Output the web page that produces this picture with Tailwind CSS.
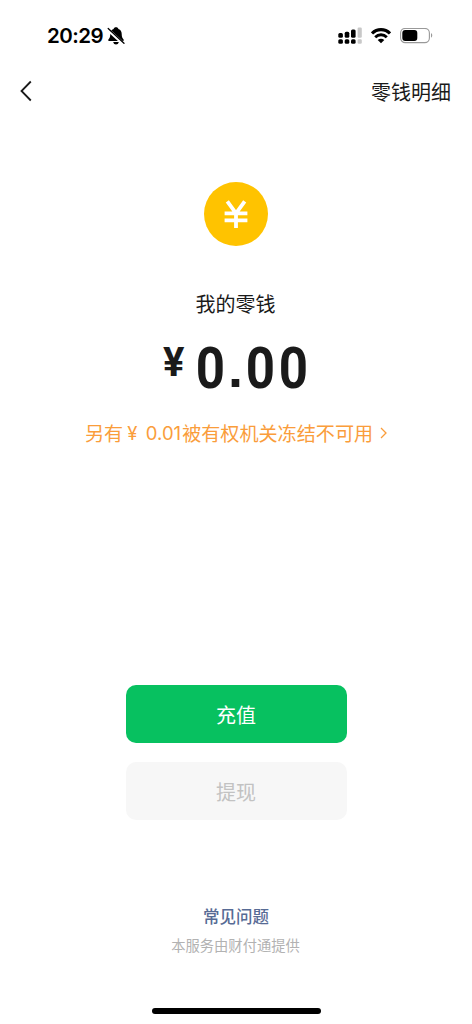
<!DOCTYPE html>
<html lang="zh-CN">
<head>
<meta charset="utf-8">
<title>我的零钱</title>
<script src="https://cdn.jsdelivr.net/npm/@tailwindcss/browser@4"></script>
</head>
<body class="bg-white">
<div class="w-[472px] h-[1024px] overflow-hidden bg-white flex flex-col items-center font-['Noto_Sans_CJK_SC',sans-serif] text-[#1a1a1a]">
  <header class="w-full h-[70px] pt-px shrink-0 flex items-center justify-between pl-[47px] pr-[39px] text-black">
    <div class="flex items-center gap-[3px]">
      <span class="font-['Inter',sans-serif] font-semibold text-[20.5px] leading-6 w-[57px] tracking-[-0.5px] whitespace-nowrap">20:29</span>
      <svg class="w-[18px] h-[18px]" viewBox="0 0 18 18">
        <path d="M9 .3C10.300 .3 11.200 1 11.400 1.900C13.900 2.800 14.700 4.700 14.700 7C14.700 10.100 15.500 11.200 16.600 12.600C17 13.400 16.600 14.100 15.800 14.100H2.200C1.400 14.100 1 13.400 1.400 12.600C2.500 11.200 3.300 10.100 3.300 7C3.300 4.700 4.100 2.800 6.600 1.900C6.800 1 7.700 .3 9 .3ZM6.200 15H11.800C11.500 16.700 10.300 17.500 9 17.500S6.500 16.700 6.200 15Z" fill="currentColor"/>
        <path d="M.5 2.300L16.500 17" stroke="white" stroke-width="3.200"/>
        <path d="M1.200 1.500L17 16.300" stroke="currentColor" stroke-width="1.300" stroke-linecap="round"/>
      </svg>
    </div>
    <div class="flex items-center">
      <svg class="w-6 h-[18px]" viewBox="0 0 24 18">
        <g fill="currentColor">
          <rect x=".3" y="6" width="4.600" height="4.800" rx="1.500"/><rect x="6.700" y="4.800" width="4.600" height="6" rx="1.500"/><rect x="13" y="2.500" width="4.600" height="8.300" rx="1.500"/>
          <rect x=".3" y="12.200" width="4.600" height="4.600" rx="1.500"/><rect x="6.700" y="12.200" width="4.600" height="4.600" rx="1.500"/><rect x="13" y="12.200" width="4.600" height="4.600" rx="1.500"/>
        </g>
        <g fill="#c8c8c8"><rect x="19.600" y=".5" width="4.200" height="10.300" rx="1.200"/><rect x="19.600" y="12.200" width="4.200" height="4.600" rx="1.200"/></g>
      </svg>
      <svg class="w-5 h-4 ml-[9px]" viewBox="0 0 20 16" fill="none" stroke="currentColor">
        <path d="M1 5.400C6 .3 14 .3 19 5.400" stroke-width="3.100"/>
        <path d="M4.200 9.200C7.500 6 12.500 6 15.800 9.200" stroke-width="2.900"/>
        <path d="M6.700 11.900C8.500 10.300 11.500 10.300 13.300 11.900L10 15.200Z" fill="currentColor" stroke="none"/>
      </svg>
      <svg class="w-[33px] h-4 ml-[9px]" viewBox="0 0 33 16">
        <rect x=".6" y=".4" width="28.800" height="14.200" rx="4.600" fill="none" stroke="#999" stroke-width="1.100"/>
        <rect x="2.300" y="2" width="15" height="11" rx="3" fill="currentColor"/>
        <path d="M31 5C32.700 5.800 32.700 9 31 9.800Z" fill="#999"/>
      </svg>
    </div>
  </header>
  <nav class="w-full h-[42px] shrink-0 flex items-center justify-between pl-5 pr-[21px]">
    <svg class="w-3 h-[22px]" viewBox="0 0 12 22" fill="none" stroke="currentColor" stroke-width="1.800"><path d="M10.800 1.500L1.500 11L10.800 20.500"/></svg>
    <span class="text-[20px] leading-[30px] pt-px">零钱明细</span>
  </nav>
  <main class="w-full flex-1 flex flex-col items-center">
    <div class="mt-[70px] w-16 h-16 rounded-full bg-[#ffc300] flex items-center justify-center">
      <svg class="w-6 h-7" viewBox="0 0 24 28" fill="none" stroke="white" stroke-width="3.800">
        <path d="M3.300 1.300L12 13.300L20.700 1.300M12 12.500V28M.6 13.300H23.400M.6 20.300H23.400"/>
      </svg>
    </div>
    <h1 class="mt-[43px] pr-px text-[20px] leading-[30px] font-normal">我的零钱</h1>
    <div class="mt-[19px] h-[60px] w-[148px] flex items-start justify-between whitespace-nowrap font-['Roboto',sans-serif] font-bold">
      <span class="text-[40px] leading-[49px] pl-px">¥</span>
      <div class="flex text-[58px] leading-[60px] text-center"><span class="w-[33px] flex justify-center scale-x-[.88]">0</span><span class="w-[17px] flex justify-center font-['Liberation_Sans',sans-serif] text-[54px]">.</span><span class="w-[33px] flex justify-center scale-x-[.88]">0</span><span class="w-[33px] flex justify-center scale-x-[.88]">0</span></div>
    </div>
    <div class="mt-[20px] h-[30px] flex items-center text-[19.1px] leading-[30px] text-[#fa9d3b] whitespace-nowrap">
      <span>另有</span><span class="font-['Inter',sans-serif] w-[59px] pl-1 flex justify-between text-[18.5px] pr-px"><span>¥</span><span>0.01</span></span><span>被有权机关冻结不可用</span>
      <svg class="ml-[7px] w-[7px] h-3" viewBox="0 0 7 12" fill="none" stroke="currentColor" stroke-width="1.300"><path d="M1 1L6 6L1 11"/></svg>
    </div>
    <button class="mt-[237px] w-[221px] h-[58px] rounded-[10px] bg-[#07c160] text-white text-[20px] leading-[30px] pt-px">充值</button>
    <button class="mt-[19px] w-[221px] h-[58px] rounded-[10px] bg-[#f7f7f7] text-[#c2c2c2] text-[20px] leading-[30px] pt-px">提现</button>
    <a class="mt-[84px] text-[16.5px] leading-6 font-medium text-[#576b95]">常见问题</a>
    <p class="mt-[7px] pr-px text-[14.3px] leading-5 text-[#b2b2b2]">本服务由财付通提供</p>
  </main>
  <div class="w-[169px] h-[6px] mb-[10px] shrink-0 rounded-full bg-black"></div>
</div>
</body>
</html>
